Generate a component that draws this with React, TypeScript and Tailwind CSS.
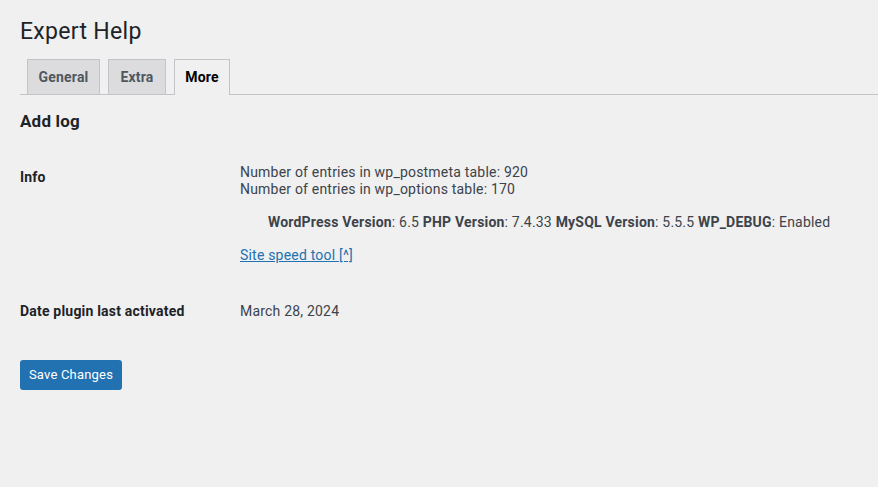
import React from 'react';

export default function App() {
  const tabs = [
    { label: 'General', active: false, w: 'w-[73px] ml-[7px]' },
    { label: 'Extra', active: false, w: 'w-[58px] ml-2' },
    { label: 'More', active: true, w: 'w-[56px] ml-2' },
  ];

  return (
    <div className="min-h-screen w-full bg-[#f0f0f1] pl-5 tracking-[0.2px] text-[#3c434a] font-['Roboto','Noto_Sans',sans-serif]">
      <h1 className="pt-[17px] text-[23px] font-normal leading-[30px] tracking-[0.3px] text-[#1d2327]">Expert Help</h1>

      {/* tabs */}
      <nav className="mt-3 flex border-b border-[#c3c4c7]">
        {tabs.map((t) => (
          <a
            key={t.label}
            href="#"
            className={
              t.w +
              (t.active
                ? ' -mb-px border border-b-0 border-[#c3c4c7] bg-[#f0f0f1] pt-[5px] pb-[6px] text-center text-sm font-bold leading-6 text-black'
                : ' border border-b-0 border-[#c3c4c7] bg-[#dcdcde] py-[5px] text-center text-sm font-bold leading-6 text-[#50575e]')
            }
          >
            {t.label}
          </a>
        ))}
      </nav>

      <h2 className="mt-[14px] text-[17px] font-bold leading-6 text-[#1d2327]">Add log</h2>

      {/* form rows */}
      <div className="mt-[15px] flex">
        <div className="w-[220px] shrink-0 pt-5 text-sm font-bold leading-[18px] text-[#1d2327]">Info</div>
        <div className="pt-4 text-sm">
          <div className="leading-[17px]">
            Number of entries in wp_postmeta table: 920
            <br />
            Number of entries in wp_options table: 170
          </div>
          <p className="mt-[14px] pl-7 leading-[21px]">
            <b className="font-bold">WordPress Version</b>: 6.5 <b className="font-bold">PHP Version</b>: 7.4.33{' '}
            <b className="font-bold">MySQL Version</b>: 5.5.5 <b className="font-bold">WP_DEBUG</b>: Enabled
          </p>
          <p className="mt-[14px] leading-[17px]">
            <a href="#" className="text-[#2271b1] underline">
              Site speed tool [^]
            </a>
          </p>
        </div>
      </div>

      <div className="mt-[38px] flex items-center text-sm leading-[18px]">
        <div className="w-[220px] shrink-0 font-bold text-[#1d2327]">Date plugin last activated</div>
        <div>March 28, 2024</div>
      </div>

      <div className="mt-10">
        <button className="h-[30px] w-[102px] rounded-[3px] bg-[#2271b1] text-center text-[13px] leading-[28px] tracking-[0.2px] text-white">
          Save Changes
        </button>
      </div>
    </div>
  );
}
